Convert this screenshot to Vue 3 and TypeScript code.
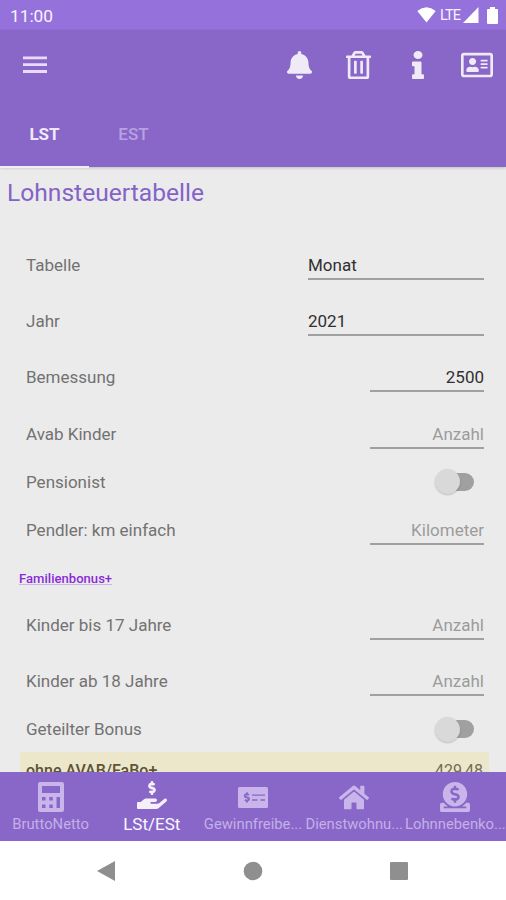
<script setup lang="ts">
interface FieldRow {
  label: string
  kind: 'select' | 'number' | 'switch' | 'section'
  value?: string
  placeholder?: string
  size: string
}

interface Icon {
  name: string
  viewBox: string
  width: number
  height: number
  path: string
}

interface NavItem extends Icon {
  label: string
  active?: boolean
}

const dollar =
  'M257.6 144.3l50 14.3c3.6 1 6.1 4.4 6.1 8.1 0 4.6-3.8 8.4-8.4 8.4h-32.8c-3.6 0-7.1-.8-10.3-2.2-4.8-2.2-10.4-1.7-14.1 2l-17.5 17.5c-5.3 5.3-4.7 14.3 1.5 18.4 9.5 6.3 20.3 10.1 31.8 11.5V240c0 8.8 7.2 16 16 16h16c8.8 0 16-7.2 16-16v-17.6c30.3-3.6 53.3-31 49.3-63-2.9-23-20.7-41.3-42.9-47.7l-50-14.3c-3.6-1-6.1-4.4-6.1-8.1 0-4.6 3.8-8.4 8.4-8.4h32.8c3.6 0 7.1.8 10.3 2.2 4.8 2.2 10.4 1.7 14.1-2l17.5-17.5c5.3-5.3 4.7-14.3-1.5-18.4-9.5-6.3-20.3-10.1-31.8-11.5V16c0-8.8-7.2-16-16-16h-16c-8.8 0-16 7.2-16 16v17.6c-30.3 3.6-53.3 31-49.3 63 2.9 23 20.7 41.3 42.9 47.7z'

const actions: Icon[] = [
  {
    name: 'bell', viewBox: '0 0 448 512', width: 25, height: 28,
    path: 'M224 512c35.32 0 63.97-28.65 63.97-64H160.03c0 35.35 28.65 64 63.97 64zm215.39-149.71c-19.32-20.76-55.47-51.99-55.47-154.29 0-77.7-54.48-139.9-127.94-155.16V32c0-17.67-14.32-32-31.98-32s-31.98 14.33-31.98 32v20.84C118.56 68.1 64.08 130.3 64.08 208c0 102.3-36.15 133.53-55.47 154.29-6 6.45-8.66 14.16-8.61 21.71.11 16.4 12.98 32 32.1 32h383.8c19.12 0 32-15.6 32.1-32 .05-7.55-2.61-15.27-8.61-21.71z',
  },
  {
    name: 'trash', viewBox: '0 0 448 512', width: 25, height: 28,
    path: 'M268 416h24a12 12 0 0 0 12-12V188a12 12 0 0 0-12-12h-24a12 12 0 0 0-12 12v216a12 12 0 0 0 12 12zM432 80h-82.41l-34-56.7A48 48 0 0 0 274.41 0H173.59a48 48 0 0 0-41.16 23.3L98.41 80H16A16 16 0 0 0 0 96v16a16 16 0 0 0 16 16h16v336a48 48 0 0 0 48 48h288a48 48 0 0 0 48-48V128h16a16 16 0 0 0 16-16V96a16 16 0 0 0-16-16zM171.84 50.91A6 6 0 0 1 177 48h94a6 6 0 0 1 5.15 2.91L293.61 80H154.39zM368 464H80V128h288zm-212-48h24a12 12 0 0 0 12-12V188a12 12 0 0 0-12-12h-24a12 12 0 0 0-12 12v216a12 12 0 0 0 12 12z',
  },
  {
    name: 'info', viewBox: '0 0 192 512', width: 12, height: 28,
    path: 'M20 424.229h20V279.771H20c-11.046 0-20-8.954-20-20V212c0-11.046 8.954-20 20-20h112c11.046 0 20 8.954 20 20v212.229h20c11.046 0 20 8.954 20 20V492c0 11.046-8.954 20-20 20H20c-11.046 0-20-8.954-20-20v-47.771c0-11.046 8.954-20 20-20zM96 0C56.235 0 24 32.235 24 72s32.235 72 72 72 72-32.235 72-72S135.764 0 96 0z',
  },
  {
    name: 'card', viewBox: '0 0 576 512', width: 32, height: 28,
    path: 'M528 32H48C21.5 32 0 53.5 0 80v352c0 26.5 21.5 48 48 48h480c26.5 0 48-21.5 48-48V80c0-26.5-21.5-48-48-48zm0 400H48V80h480v352zM208 256c35.3 0 64-28.7 64-64s-28.7-64-64-64-64 28.7-64 64 28.7 64 64 64zm-89.6 128h179.2c12.4 0 22.4-8.6 22.4-19.2v-19.2c0-31.8-30.1-57.6-67.2-57.6-10.8 0-18.7 8-44.8 8-26.9 0-33.4-8-44.8-8-37.1 0-67.2 25.8-67.2 57.6v19.2c0 10.6 10 19.2 22.4 19.2zM360 320h112c4.4 0 8-3.6 8-8v-16c0-4.4-3.6-8-8-8H360c-4.4 0-8 3.6-8 8v16c0 4.4 3.6 8 8 8zm0-64h112c4.4 0 8-3.6 8-8v-16c0-4.4-3.6-8-8-8H360c-4.4 0-8 3.6-8 8v16c0 4.4 3.6 8 8 8zm0-64h112c4.4 0 8-3.6 8-8v-16c0-4.4-3.6-8-8-8H360c-4.4 0-8 3.6-8 8v16c0 4.4 3.6 8 8 8z',
  },
]

const rows: FieldRow[] = [
  { label: 'Tabelle', kind: 'select', value: 'Monat', size: 'tall' },
  { label: 'Jahr', kind: 'select', value: '2021', size: 'tall' },
  { label: 'Bemessung', kind: 'number', value: '2500', size: 'tall' },
  { label: 'Avab Kinder', kind: 'number', placeholder: 'Anzahl', size: 'tall' },
  { label: 'Pensionist', kind: 'switch', size: 'short' },
  { label: 'Pendler: km einfach', kind: 'number', placeholder: 'Kilometer', size: 'tall' },
  { label: 'Familienbonus+', kind: 'section', size: 'head' },
  { label: 'Kinder bis 17 Jahre', kind: 'number', placeholder: 'Anzahl', size: 'tall' },
  { label: 'Kinder ab 18 Jahre', kind: 'number', placeholder: 'Anzahl', size: 'tall' },
  { label: 'Geteilter Bonus', kind: 'switch', size: 'short' },
]

const navItems: NavItem[] = [
  {
    name: 'calculator', label: 'BruttoNetto', viewBox: '0 0 26 30', width: 26, height: 30,
    path: 'M2 0H24a2 2 0 0 1 2 2V28a2 2 0 0 1-2 2H2a2 2 0 0 1-2-2V2a2 2 0 0 1 2-2zM4 4V11H22V4zM4 15V18.5H7.5V15zM11.3 15V18.5H14.8V15zM18.5 15V26H22V15zM4 22.5V26H7.5V22.5zM11.3 22.5V26H14.8V22.5z',
  },
  {
    name: 'hand', label: 'LSt/ESt', active: true, viewBox: '0 0 576 512', width: 30, height: 28,
    path: dollar + 'M565.3 328.1c-11.8-10.7-30.2-10-42.6 0L430.3 402c-11.3 9.1-25.4 14-40 14H272c-8.8 0-16-7.2-16-16s7.2-16 16-16h78.3c15.9 0 30.7-10.9 33.3-26.6 3.3-20-12.1-37.4-31.6-37.4H192c-27 0-53.1 9.3-74.1 26.3L71.4 384H16c-8.8 0-16 7.2-16 16v96c0 8.8 7.2 16 16 16h356.8c14.5 0 28.6-4.9 40-14L564 377c15.2-12.1 16.4-35.3 1.3-48.9z',
  },
  {
    name: 'check', label: 'Gewinnfreibe...', viewBox: '0 0 30 21', width: 30, height: 21,
    path: 'M1.5 0H28.5A1.5 1.5 0 0 1 30 1.5V19.5A1.5 1.5 0 0 1 28.5 21H1.5A1.5 1.5 0 0 1 0 19.5V1.5A1.5 1.5 0 0 1 1.5 0zM14 7.4V8.7H27V7.4zM14 12.2V13.7H19.5V12.2zM22.5 12.2V13.7H27V12.2z',
  },
  {
    name: 'home', label: 'Dienstwohnu...', viewBox: '0 0 576 512', width: 30, height: 27,
    path: 'M280.37 148.26L96 300.11V464a16 16 0 0 0 16 16l112.06-.29a16 16 0 0 0 15.92-16V368a16 16 0 0 1 16-16h64a16 16 0 0 1 16 16v95.64a16 16 0 0 0 16 16.05L464 480a16 16 0 0 0 16-16V300L295.67 148.26a12.19 12.19 0 0 0-15.3 0zM571.6 251.47L488 182.56V44.05a12 12 0 0 0-12-12h-56a12 12 0 0 0-12 12v72.61L318.47 43a48 48 0 0 0-61 0L4.34 251.47a12 12 0 0 0-1.6 16.9l25.5 31A12 12 0 0 0 45.15 301l235.22-193.74a12.19 12.19 0 0 1 15.3 0L530.9 301a12 12 0 0 0 16.9-1.6l25.5-31a12 12 0 0 0-1.7-16.93z',
  },
  {
    name: 'donate', label: 'Lohnnebenko...', viewBox: '0 0 512 512', width: 30, height: 30,
    path: 'M256 416c114.9 0 208-93.1 208-208S370.9 0 256 0 48 93.1 48 208s93.1 208 208 208zM233.8 97.4V80.6c0-9.2 7.4-16.6 16.6-16.6h11.1c9.2 0 16.6 7.4 16.6 16.6v17c15.5.8 30.5 6.1 43 15.4 5.6 4.1 6.2 12.3 1.2 17.1L306 145.6c-3.8 3.7-9.5 3.8-14 1-5.4-3.4-11.4-5.1-17.8-5.1h-38.9c-9 0-16.3 8.2-16.3 18.3 0 8.2 5 15.5 12.1 17.6l62.3 18.7c25.7 7.7 43.7 32.4 43.7 60.1 0 34-26.4 61.5-59.1 62.4v16.8c0 9.2-7.4 16.6-16.6 16.6h-11.1c-9.2 0-16.6-7.4-16.6-16.6v-17c-15.5-.8-30.5-6.1-43-15.4-5.6-4.1-6.2-12.3-1.2-17.1l16.3-15.5c3.8-3.7 9.5-3.8 14-1 5.4 3.4 11.4 5.1 17.8 5.1h38.9c9 0 16.3-8.2 16.3-18.3 0-8.2-5-15.5-12.1-17.6l-62.3-18.7c-25.7-7.7-43.7-32.4-43.7-60.1.1-34 26.4-61.5 59.1-62.4zM480 352h-32.5c-19.6 26-44.6 47.7-73 64h63.8c5.3 0 9.6 3.6 9.6 8v16c0 4.4-4.3 8-9.6 8H73.6c-5.3 0-9.6-3.6-9.6-8v-16c0-4.4 4.3-8 9.6-8h63.8c-28.4-16.3-53.3-38-73-64H32c-17.7 0-32 14.3-32 32v96c0 17.7 14.3 32 32 32h448c17.7 0 32-14.3 32-32v-96c0-17.7-14.3-32-32-32z',
  },
]
</script>

<template>
  <div class="phone">
    <div class="status">
      <span class="clock">11:00</span>
      <div class="signals">
        <svg class="wifi" width="19" height="16" viewBox="0 0 19 16"><path d="M9.5 15.5L.3 4Q9.5-3.4 18.7 4z" /></svg>
        <span class="lte">LTE</span>
        <svg class="cell" width="16" height="16" viewBox="0 0 16 16"><path d="M15.5 0V16H0z" /></svg>
        <svg class="battery" width="11" height="17" viewBox="0 0 11 17"><path d="M3 0H8V2H10a1 1 0 0 1 1 1V16a1 1 0 0 1-1 1H1a1 1 0 0 1-1-1V3a1 1 0 0 1 1-1H3z" /></svg>
      </div>
    </div>

    <header class="appbar">
      <div class="toolbar">
        <svg class="menu" width="24" height="18" viewBox="0 0 24 18"><path d="M0 .5H24V3.3H0zM0 7.3H24V10.1H0zM0 14.1H24V16.9H0z" /></svg>
        <div class="actions">
          <span v-for="a in actions" :key="a.name" class="action">
            <svg :width="a.width" :height="a.height" :viewBox="a.viewBox" preserveAspectRatio="none"><path :d="a.path" /></svg>
          </span>
        </div>
      </div>
      <nav class="tabs">
        <span class="tab selected">LST</span>
        <span class="tab">EST</span>
      </nav>
    </header>

    <main class="content">
      <h1>Lohnsteuertabelle</h1>
      <div class="form">
        <div v-for="r in rows" :key="r.label" class="row" :class="[r.size, r.kind]">
          <span class="label">{{ r.label }}</span>
          <span v-if="r.kind === 'select' || r.kind === 'number'" class="field" :class="{ hint: !r.value }">{{ r.value ?? r.placeholder }}</span>
          <span v-else-if="r.kind === 'switch'" class="toggle"><span class="knob"></span></span>
        </div>
      </div>
      <div class="result">
        <b>ohne AVAB/FaBo+</b>
        <span class="amount">429,48</span>
      </div>
    </main>

    <nav class="bottom">
      <div v-for="n in navItems" :key="n.name" class="item" :class="{ active: n.active }">
        <span class="glyph">
          <svg :width="n.width" :height="n.height" :viewBox="n.viewBox" preserveAspectRatio="none" fill-rule="evenodd">
            <path :d="n.path" />
            <path v-if="n.name === 'check'" class="cut" :d="dollar" transform="translate(-2.9 5.2) scale(.041)" />
          </svg>
        </span>
        <span class="caption">{{ n.label }}</span>
      </div>
    </nav>

    <div class="system">
      <svg width="20" height="22" viewBox="0 0 20 22"><path d="M19 1V21L1 11z" /></svg>
      <svg width="20" height="20" viewBox="0 0 20 20"><circle cx="10" cy="10" r="9.3" /></svg>
      <svg width="20" height="20" viewBox="0 0 20 20"><rect x="1" y="1" width="18" height="18" rx="1" /></svg>
    </div>
  </div>
</template>

<style>
body {
  margin: 0;
}
</style>

<style scoped>
.phone {
  display: flex;
  flex-direction: column;
  width: 506px;
  height: 900px;
  overflow: hidden;
  background: #ebebeb;
  font-family: Roboto, 'Liberation Sans', sans-serif;
  font-size: 17px;
}
svg {
  display: block;
  flex: none;
}
.status {
  display: flex;
  flex: none;
  align-items: center;
  justify-content: space-between;
  box-sizing: border-box;
  height: 30px;
  padding: 0 8px 0 10px;
  background: #9571dc;
  color: #f8f2ff;
  fill: #fff;
}
.clock {
  padding-top: 2px;
  font-size: 17.3px;
}
.signals {
  display: flex;
  align-items: center;
}
.wifi {
  margin-right: 4px;
}
.lte {
  margin-right: 3px;
  font-size: 14.5px;
  letter-spacing: -0.9px;
}
.battery {
  margin-left: 8px;
}
.appbar {
  z-index: 1;
  flex: none;
  height: 137px;
  background: #8867c9;
  box-shadow: 0 1px 3px rgba(0, 0, 0, 0.2);
}
.toolbar {
  display: flex;
  align-items: center;
  justify-content: space-between;
  height: 69px;
  padding-left: 23px;
  fill: #f0eaf6;
}
.menu {
  fill: #e9dcfa;
}
.actions {
  display: flex;
}
.action {
  display: flex;
  align-items: center;
  justify-content: center;
  width: 59px;
}
.tabs {
  display: flex;
  height: 68px;
}
.tab {
  box-sizing: border-box;
  width: 89px;
  height: 69px;
  border-bottom: 2px solid transparent;
  color: #b9a1e1;
  font-size: 17px;
  font-weight: 500;
  line-height: 71px;
  text-align: center;
}
.tab.selected {
  border-color: #f3edfa;
  color: #f1e8fc;
  font-weight: 700;
}
.content {
  flex: 1;
  min-height: 0;
  overflow: hidden;
}
h1 {
  box-sizing: border-box;
  margin: 0;
  padding: 11px 0 0 7px;
  height: 70px;
  color: #8463c8;
  font-size: 24.6px;
  font-weight: 400;
  line-height: 30px;
}
.row {
  display: flex;
  align-items: center;
  justify-content: space-between;
  padding: 0 22px 0 26px;
}
.tall {
  height: 56.2px;
}
.short {
  height: 40px;
}
.head {
  height: 39px;
}
.label {
  color: #727272;
}
.field {
  box-sizing: border-box;
  height: 30px;
  border-bottom: 2px solid #a0a0a0;
  color: #303030;
  line-height: 31px;
}
.select .field {
  width: 176px;
}
.number .field {
  width: 114px;
  text-align: right;
}
.field.hint {
  color: #9b9b9b;
}
.section {
  padding-left: 19px;
}
.section .label {
  padding-top: 2px;
  color: #8a2bd8;
  font-size: 13.1px;
  font-weight: 500;
  text-decoration: underline;
  text-decoration-color: #c9b5e6;
}
.toggle {
  display: flex;
  align-items: center;
  box-sizing: border-box;
  width: 36px;
  height: 18px;
  margin-right: 10px;
  border-radius: 9px;
  background: #a0a0a0;
}
.knob {
  flex: none;
  width: 25px;
  height: 25px;
  margin-left: -3px;
  border-radius: 50%;
  background: #d9d9d9;
  box-shadow: 0 1px 2px rgba(0, 0, 0, 0.2);
}
.result {
  display: flex;
  justify-content: space-between;
  margin: 3px 17px 0 20px;
  padding: 9px 6px;
  background: #ece7ca;
  color: #5d5338;
  font-size: 16px;
}
.result b {
  font-weight: 500;
}
.amount {
  color: #736c58;
}
.bottom {
  display: grid;
  z-index: 1;
  flex: none;
  grid-template-columns: repeat(5, 1fr);
  height: 69px;
  background: #8867c9;
}
.item {
  display: flex;
  flex-direction: column;
  align-items: center;
  min-width: 0;
  padding-top: 9px;
  color: #c4afe6;
  fill: #c9b5e9;
  font-size: 14.8px;
}
.item.active {
  color: #fbf7ff;
  fill: #f5effa;
  font-size: 17px;
}
.glyph {
  display: flex;
  align-items: center;
  height: 32px;
}
.item.active .glyph {
  align-items: flex-start;
}
.cut {
  fill: #8867c9;
}
.caption {
  line-height: 22px;
  white-space: nowrap;
}
.system {
  display: flex;
  flex: none;
  align-items: center;
  justify-content: space-between;
  box-sizing: border-box;
  height: 59px;
  padding: 0 97px 0 96px;
  background: #fff;
  fill: #8f8f8f;
}
</style>
